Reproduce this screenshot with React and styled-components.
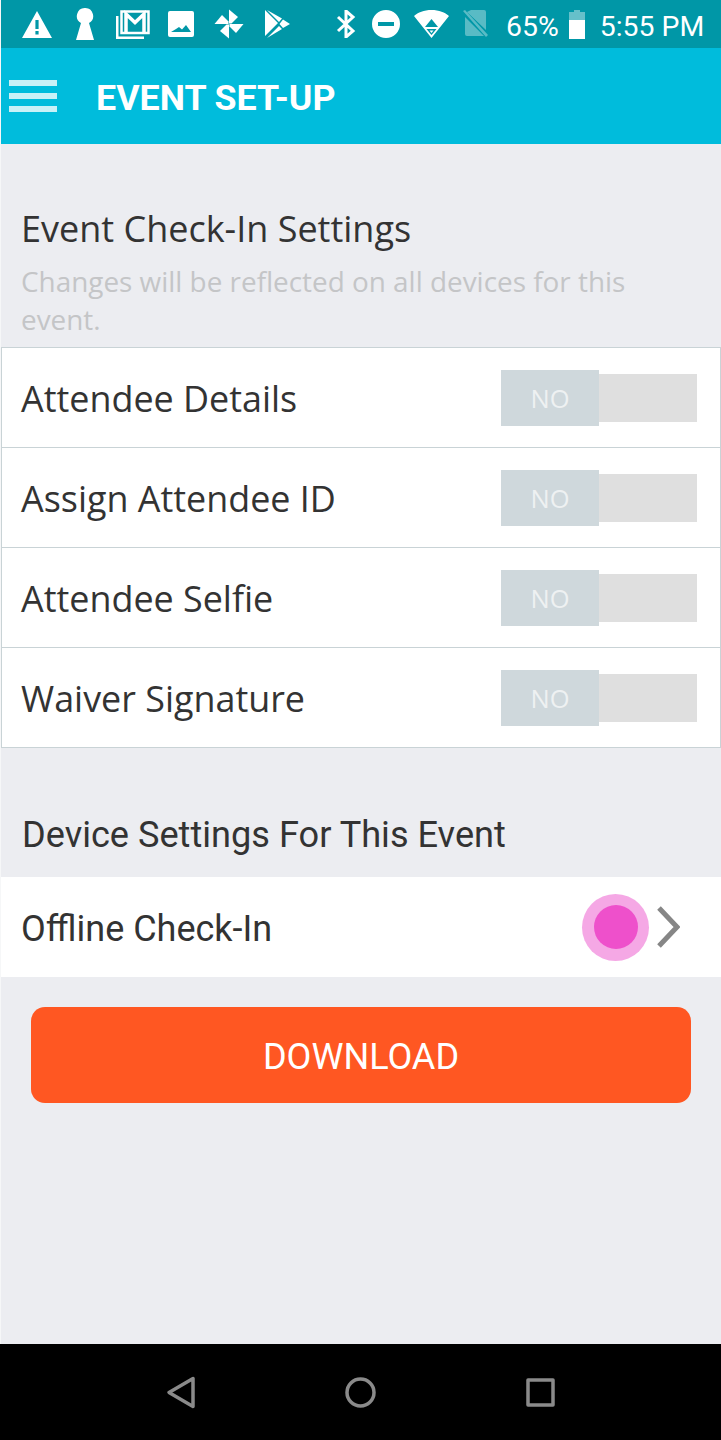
import React from "react";
import styled, { createGlobalStyle } from "styled-components";

const Global = createGlobalStyle`
  html, body { margin: 0; padding: 0; background: #fff; }
  * { box-sizing: border-box; }
`;

const Screen = styled.div`
  width: 721px;
  height: 1440px;
  display: flex;
  flex-direction: column;
  font-family: "Open Sans", sans-serif;
  overflow: hidden;
`;

const Main = styled.main`
  flex: 1;
  display: flex;
  flex-direction: column;
  border-left: 1px solid #f6f7f8;
  background: #ecedf1;
`;

const StatusBar = styled.div`
  height: 48px;
  flex: none;
  display: flex;
  align-items: center;
  padding-left: 21px;
  background: #0097a7;
  color: #fff;
  font-family: Roboto, sans-serif;
`;

const StatusIcon = styled.svg`
  flex: none;
  margin-left: ${(p) => p.$gap || 0}px;
  fill: #fff;
`;

const StatusText = styled.span`
  margin-left: ${(p) => p.$gap}px;
  padding-top: 5px;
  font-size: 28.4px;
  line-height: 43px;
  white-space: nowrap;
`;

const AppBar = styled.header`
  height: 96px;
  flex: none;
  display: flex;
  align-items: center;
  padding-left: 8px;
  background: #00bcdc;
`;

const Burger = styled.div`
  width: 48px;
  height: 32px;
  display: flex;
  flex-direction: column;
  justify-content: space-between;
  span {
    display: block;
    height: 6px;
    background: #c9f1f7;
  }
`;

const Title = styled.h1`
  margin: 4px 0 0 39px;
  font-family: Roboto, sans-serif;
  font-size: 35.8px;
  font-weight: 700;
  color: #fff;
`;

const Section = styled.section`
  padding: 62px 60px 0 20px;
`;

const Heading = styled.h2`
  margin: 0;
  font-size: 36px;
  line-height: 46px;
  font-weight: 400;
  color: #333;
`;

const Hint = styled.p`
  margin: 10px 0 0;
  font-size: 27.9px;
  line-height: 38px;
  color: #c4c5c7;
`;

const List = styled.div`
  margin-top: 9px;
  border-bottom: 1px solid #c9d3d6;
`;

const Row = styled.div`
  height: 100px;
  display: flex;
  align-items: center;
  justify-content: space-between;
  padding: 0 23px 0 19px;
  background: #fff;
  border: 1px solid #c9d3d6;
  border-bottom: 0;
`;

const RowLabel = styled.span`
  padding-top: 2px;
  font-size: 35.9px;
  color: #333;
`;

const Toggle = styled.div`
  display: flex;
  align-items: center;
`;

const Knob = styled.div`
  width: 98px;
  height: 56px;
  display: flex;
  align-items: center;
  justify-content: center;
  background: #cfd8dc;
  color: #eef1f2;
  font-size: 25.5px;
`;

const Track = styled.div`
  width: 98px;
  height: 48px;
  background: #dfdfdf;
`;

const DeviceHeading = styled.h2`
  margin: 63px 0 0 21px;
  font-family: Roboto, sans-serif;
  font-size: 36.15px;
  line-height: 48px;
  font-weight: 400;
  color: #333;
`;

const DeviceRow = styled.div`
  height: 100px;
  margin-top: 18px;
  display: flex;
  align-items: center;
  padding: 0 41px 0 20px;
  background: #fff;
`;

const DeviceLabel = styled.span`
  flex: 1;
  padding-top: 4px;
  font-family: Roboto, sans-serif;
  font-size: 36px;
  color: #333;
`;

const Touch = styled.div`
  width: 67px;
  height: 67px;
  margin-right: 7px;
  display: flex;
  align-items: center;
  justify-content: center;
  border-radius: 50%;
  background: #f5a8e5;
  &::after {
    content: "";
    width: 44px;
    height: 44px;
    border-radius: 50%;
    background: #ee50cb;
  }
`;

const DownloadButton = styled.button`
  display: block;
  width: 660px;
  height: 96px;
  margin: 30px 0 0 30px;
  padding: 4px 0 0;
  border: 0;
  border-radius: 14px;
  background: #ff5722;
  color: #fff;
  font-family: Roboto, sans-serif;
  font-size: 36.1px;
`;

const NavBar = styled.nav`
  height: 96px;
  flex: none;
  display: flex;
  align-items: center;
  justify-content: center;
  gap: 135px;
  background: #000;
`;

const NavIcon = styled.svg`
  width: 45px;
  height: 45px;
  fill: none;
  stroke: #8a8a8a;
  stroke-width: 3.5;
  stroke-linejoin: round;
`;

const rows = ["Attendee Details", "Assign Attendee ID", "Attendee Selfie", "Waiver Signature"];
const blade = "M15 14.500V.5l9 7.500-6.500 6.500Z";

export default function App() {
  return (
    <Screen>
      <Global />
      <Main>
        <StatusBar>
          <StatusIcon width="30" height="27" viewBox="0 0 30 27">
            <path fillRule="evenodd" d="M15 0 30 27H0ZM13.400 9v9h3.200V9Zm0 11v3.400h3.200V20Z" />
          </StatusIcon>
          <StatusIcon $gap={24} width="18" height="32" viewBox="0 0 18 32">
            <path d="M9 0a8 8 0 0 1 4 15l5 17H0l5-17A8 8 0 0 1 9 0Z" />
          </StatusIcon>
          <StatusIcon $gap={22} width="34" height="29" viewBox="0 0 34 29">
            <path d="M5.500 1.500H32.500V23H5.500Z" fill="none" stroke="#fff" strokeWidth="2.500" />
            <path d="M10 22V4L19 12.500 28 4V22" fill="none" stroke="#fff" strokeWidth="3.500" />
            <path d="M0 6h2.500v20.500H28V29H0Z" />
          </StatusIcon>
          <StatusIcon $gap={18} width="26" height="26" viewBox="0 0 26 26">
            <path fillRule="evenodd" d="M2 0h22a2 2 0 0 1 2 2v22a2 2 0 0 1-2 2H2a2 2 0 0 1-2-2V2a2 2 0 0 1 2-2ZM3 21h20l-5-7-4 4.500-3-2.500-3 2Z" />
          </StatusIcon>
          <StatusIcon $gap={20} width="30" height="30" viewBox="0 0 30 30">
            <path d={blade} />
            <path d={blade} transform="rotate(90 15 15)" />
            <path d={blade} transform="rotate(180 15 15)" />
            <path d={blade} transform="rotate(270 15 15)" />
          </StatusIcon>
          <StatusIcon $gap={21} width="25" height="28" viewBox="0 0 25 28">
            <path d="M0 0 13 13 0 26ZM2 0l15 8.500-3 3.500ZM18 9.500 25 14l-7 4-3.500-4ZM2 28l12-12 3 3Z" />
          </StatusIcon>
          <StatusIcon $gap={46} width="20" height="28" viewBox="0 0 20 28">
            <path d="M2 7l15 14-7 6V1l7 6L2 21" fill="none" stroke="#fff" strokeWidth="3" />
          </StatusIcon>
          <StatusIcon $gap={16} width="28" height="28" viewBox="0 0 28 28">
            <path fillRule="evenodd" d="M14 0a14 14 0 1 1 0 28 14 14 0 0 1 0-28ZM6 12v4h16v-4Z" />
          </StatusIcon>
          <StatusIcon $gap={14} width="35" height="28" viewBox="0 0 35 28">
            <path fillRule="evenodd" d="M17.500 0C25 0 31 2.500 35 6L17.500 28 0 6C4 2.500 10 0 17.500 0ZM17.500 9 11 17h13ZM12.500 19l5 6 5-6Zm3 1.500h4l-2 2.500Z" />
          </StatusIcon>
          <StatusIcon $gap={14} width="25" height="28" viewBox="0 0 25 28" style={{ opacity: 0.35 }}>
            <path d="M8 0h13a2 2 0 0 1 2 2v18L4 2ZM2 7l19 19H4a2 2 0 0 1-2-2ZM0 1 2 0l23 25-2 2Z" />
          </StatusIcon>
          <StatusText $gap={18}>65%</StatusText>
          <StatusIcon $gap={10} width="16" height="29" viewBox="0 0 16 29">
            <path d="M5 0h6v2h5v8H0V2h5Z" opacity=".4" />
            <path d="M0 10h16v19H0Z" />
          </StatusIcon>
          <StatusText $gap={15}>5:55 PM</StatusText>
        </StatusBar>
        <AppBar>
          <Burger>
            <span />
            <span />
            <span />
          </Burger>
          <Title>EVENT SET-UP</Title>
        </AppBar>
        <Section>
          <Heading>Event Check-In Settings</Heading>
          <Hint>Changes will be reflected on all devices for this event.</Hint>
        </Section>
        <List>
          {rows.map((label) => (
            <Row key={label}>
              <RowLabel>{label}</RowLabel>
              <Toggle>
                <Knob>NO</Knob>
                <Track />
              </Toggle>
            </Row>
          ))}
        </List>
        <DeviceHeading>Device Settings For This Event</DeviceHeading>
        <DeviceRow>
          <DeviceLabel>Offline Check-In</DeviceLabel>
          <Touch />
          <svg width="24" height="42" viewBox="0 0 24 42">
            <path d="M3 2 21 21 3 40" fill="none" stroke="#868686" strokeWidth="5" />
          </svg>
        </DeviceRow>
        <DownloadButton>DOWNLOAD</DownloadButton>
      </Main>
      <NavBar>
        <NavIcon viewBox="0 0 45 45">
          <path d="M35 8.500v28L11 22.500Z" />
        </NavIcon>
        <NavIcon viewBox="0 0 45 45">
          <circle cx="22.500" cy="22.500" r="13.500" />
        </NavIcon>
        <NavIcon viewBox="0 0 45 45">
          <rect x="10" y="10" width="25" height="25" />
        </NavIcon>
      </NavBar>
    </Screen>
  );
}
